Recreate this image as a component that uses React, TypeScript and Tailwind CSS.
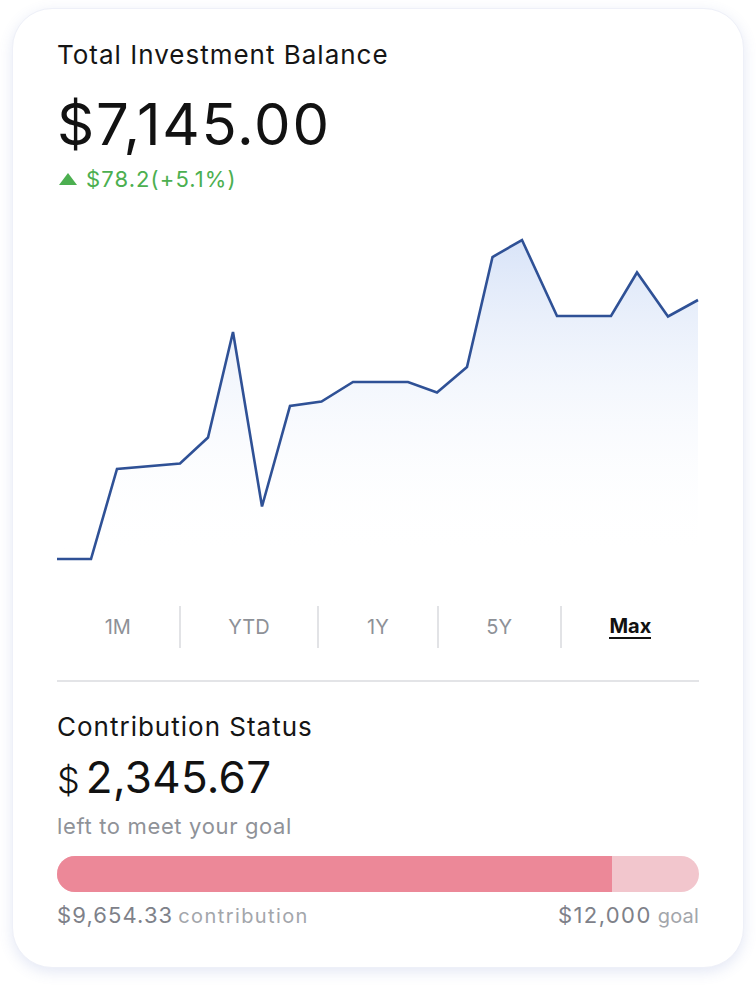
import React from "react";

const points: [number, number][] = [
  [0, 339], [34, 339], [60, 249], [123, 243.5], [151, 217.5], [176, 112],
  [205, 286.5], [233, 186], [264.5, 181.5], [296, 162], [351, 162], [380, 172.5],
  [410, 147], [435.5, 37], [465, 20], [500, 96], [554, 96], [580, 52.5],
  [611, 96.5], [641, 80],
];

const tabs = ["1M", "YTD", "1Y", "5Y", "Max"];

function Chart() {
  const line = points.map(([x, y], i) => `${i === 0 ? "M" : "L"}${x} ${y}`).join(" ");
  const area = `${line} L641 325 L0 325 Z`;
  return (
    <svg width="641" height="350" viewBox="0 0 641 350" className="block overflow-visible">
      <defs>
        <linearGradient id="fill" x1="0" y1="0" x2="0" y2="1" gradientUnits="objectBoundingBox">
          <stop offset="0" stopColor="#d9e4f8" />
          <stop offset="1" stopColor="#ffffff" stopOpacity="0" />
        </linearGradient>
      </defs>
      <path d={area} fill="url(#fill)" />
      <path d={line} fill="none" stroke="#2f5196" strokeWidth="2.6" strokeLinejoin="miter" />
    </svg>
  );
}

export default function App() {
  return (
    <div className="min-h-screen bg-white pl-[12px] pt-[8px] font-['Inter',sans-serif]">
      <div className="w-[732px] h-[960px] rounded-[40px] bg-white border border-[#eef0f8] shadow-[0_4px_14px_rgba(90,110,190,0.16)] px-[44px] pt-[30px]">
        <div className="text-[26px] leading-[32px] text-[#151515] tracking-[1px]">
          Total Investment Balance
        </div>
        <div className="mt-[21px] text-[58px] leading-[64px] text-[#121212] tracking-[1.8px]">
          $7,145.00
        </div>
        <div className="mt-[9px] flex items-center text-[22px] leading-[28px] text-[#4caf50] tracking-[1.1px]">
          <svg width="18" height="12" viewBox="0 0 18 12" className="ml-[2px] mr-[9px]">
            <path d="M9 0 L18 12 L0 12 Z" fill="#4caf50" />
          </svg>
          $78.2(+5.1%)
        </div>
        <div className="mt-[27px]">
          <Chart />
        </div>
        <div className="mt-[36px] flex h-[42px] items-stretch text-[20px]">
          {tabs.map((t, i) => (
            <React.Fragment key={t}>
              {i > 0 && <div className="w-[2px] bg-[#e2e3e6]" />}
              <div className="flex flex-auto items-center justify-center">
                {t === "Max" ? (
                  <span className="font-bold text-[#111] border-b-2 border-[#111] leading-[22px]">Max</span>
                ) : (
                  <span className="text-[#8e9197]">{t}</span>
                )}
              </div>
            </React.Fragment>
          ))}
        </div>
        <div className="mt-[32px] h-[2px] bg-[#e3e4e7]" />
        <div className="mt-[29px] text-[26px] leading-[32px] text-[#151515] tracking-[1px]">
          Contribution Status
        </div>
        <div className="mt-[8px] flex items-baseline leading-[52px] text-[#121212]">
          <span className="text-[36px] font-light mr-[6px]">$</span>
          <span className="text-[44px] tracking-[0.3px]">2,345.67</span>
        </div>
        <div className="mt-[6px] text-[22px] leading-[28px] text-[#8f9298] tracking-[0.65px]">
          left to meet your goal
        </div>
        <div className="mt-[16px] flex h-[36px] overflow-hidden rounded-full bg-[#f2c6cd]">
          <div className="w-[86.5%] bg-[#ec8898]" />
        </div>
        <div className="mt-[11px] flex items-baseline justify-between text-[20px] leading-[24px]">
          <div className="flex items-baseline">
            <span className="text-[22px] tracking-[1.1px] text-[#7e8189]">$9,654.33</span>
            <span className="ml-[5px] tracking-[1.4px] text-[#a3a6ab]">contribution</span>
          </div>
          <div className="flex items-baseline">
            <span className="text-[22px] tracking-[1.4px] text-[#7e8189]">$12,000</span>
            <span className="ml-[6px] tracking-[0.2px] text-[#a3a6ab]">goal</span>
          </div>
        </div>
      </div>
    </div>
  );
}
